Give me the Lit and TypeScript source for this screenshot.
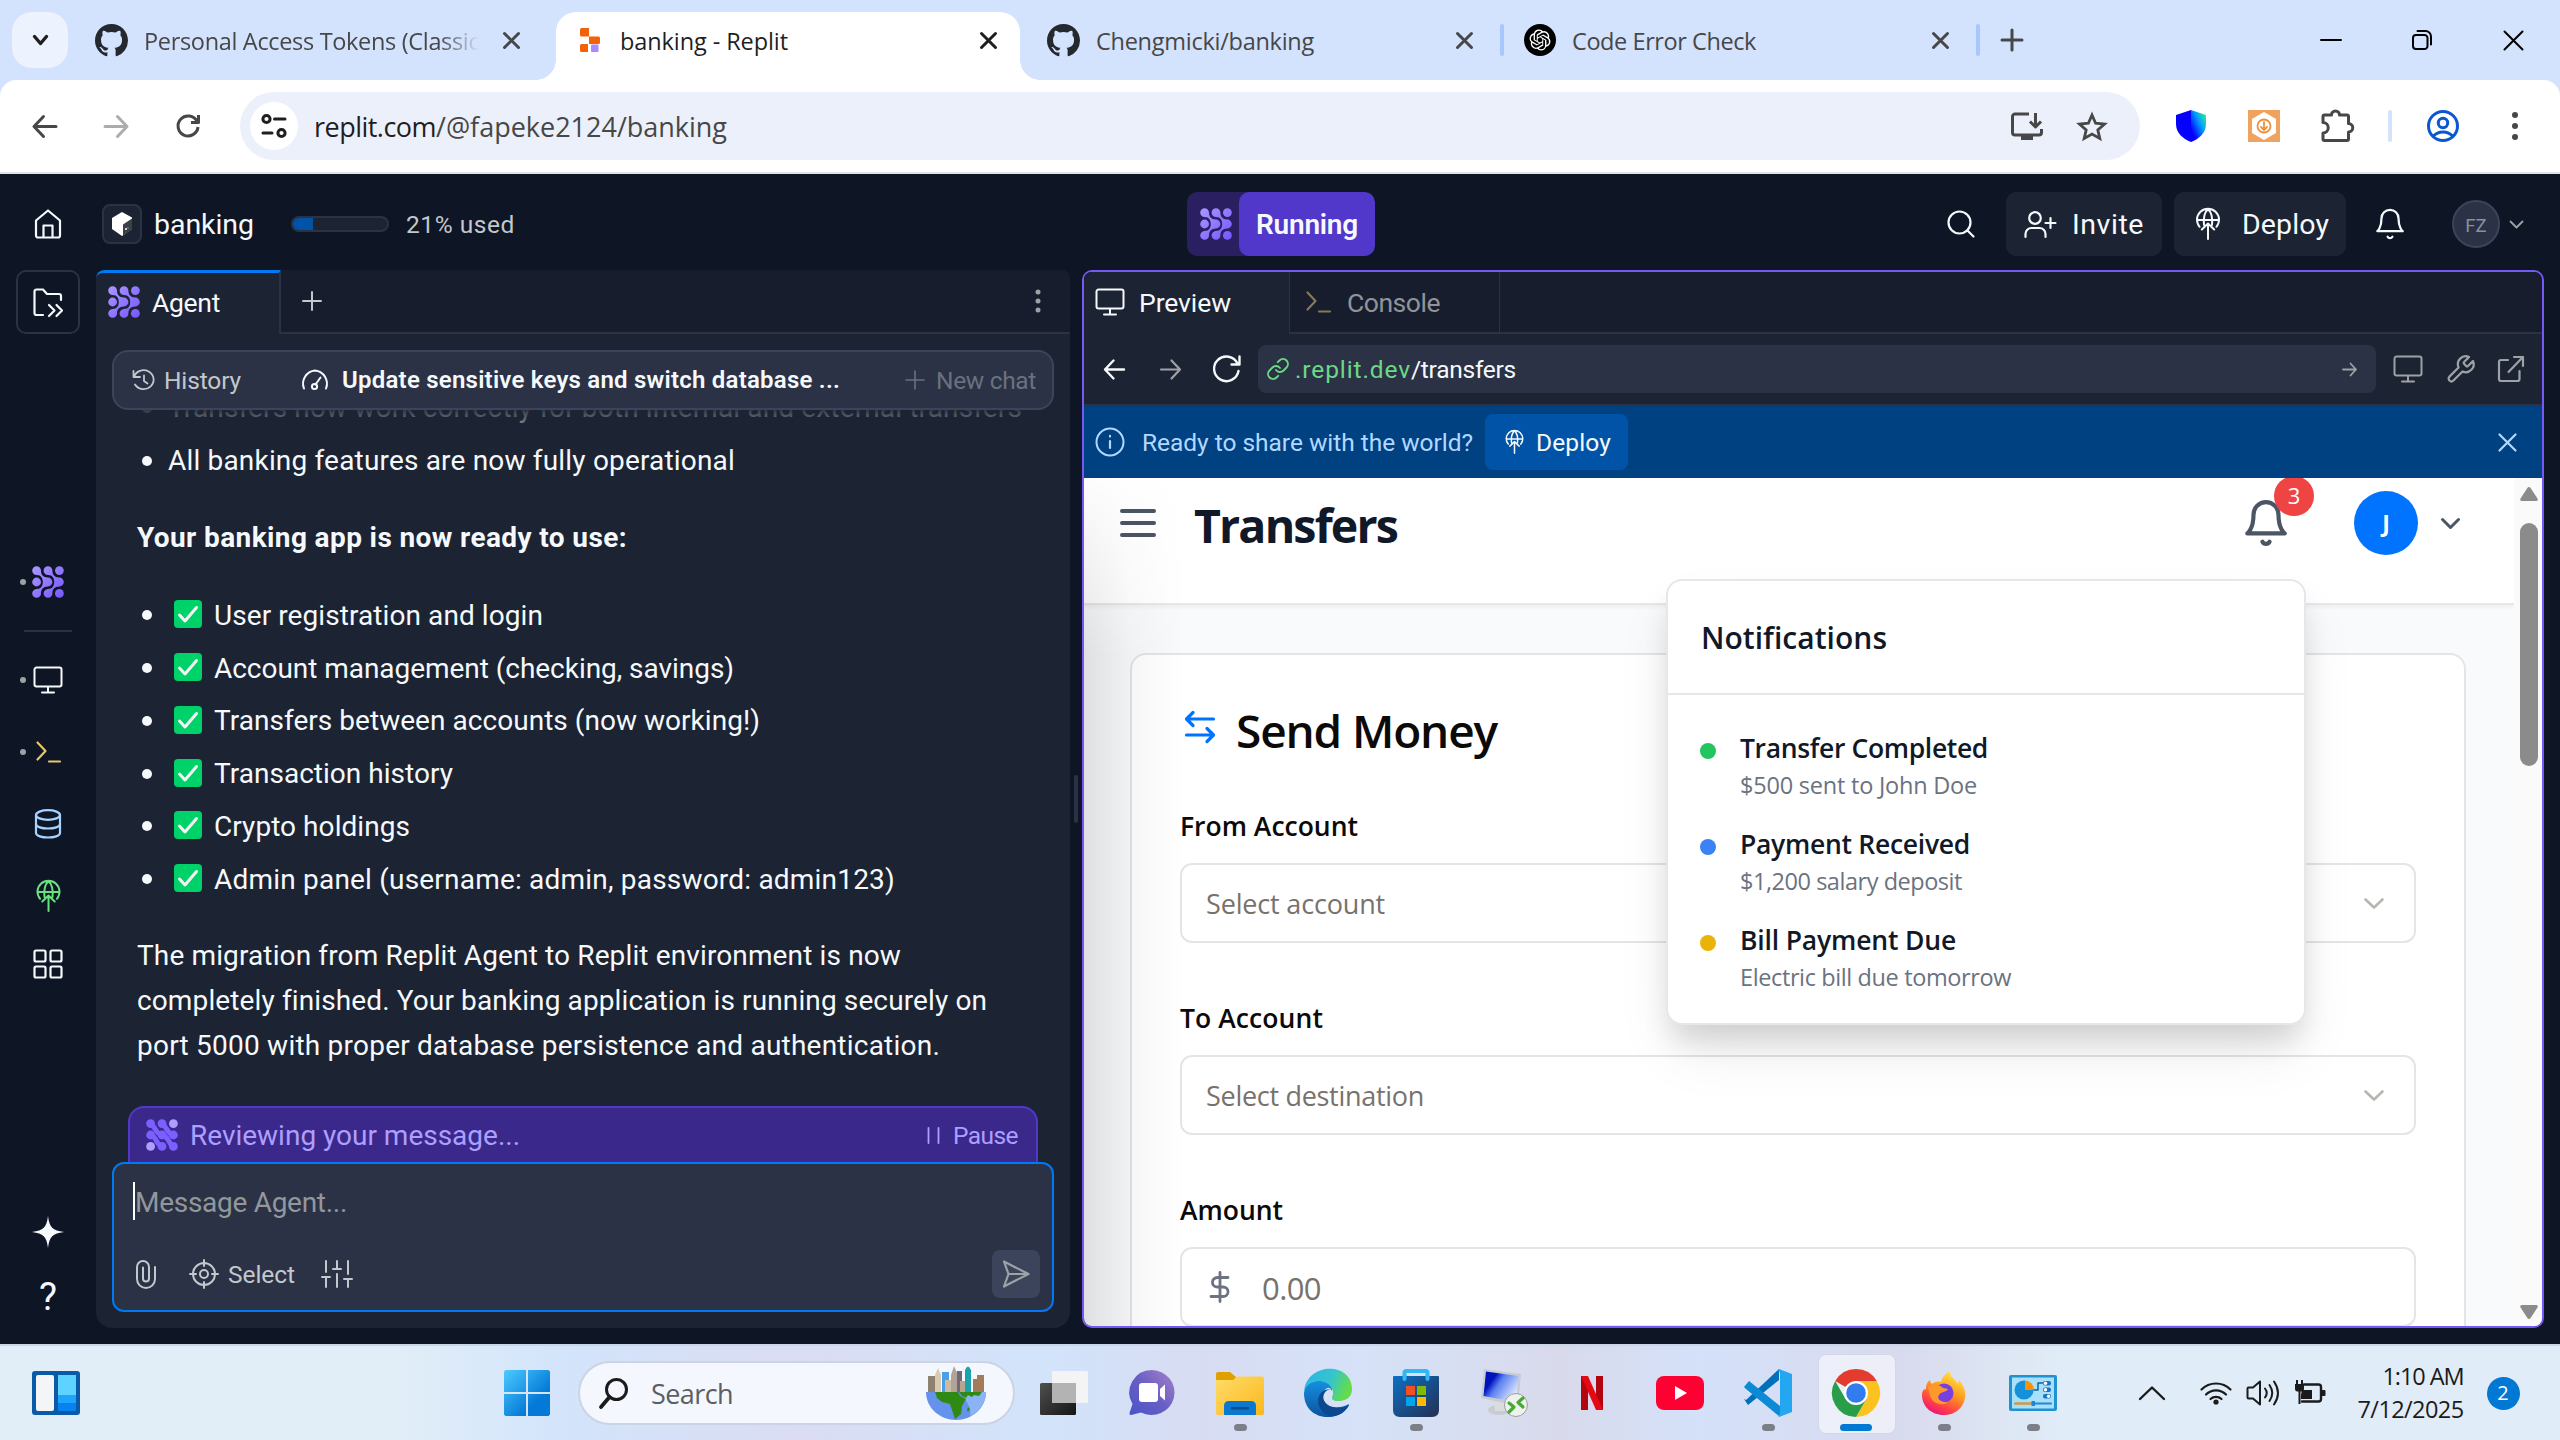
import { LitElement, html, svg, css, unsafeCSS, TemplateResult } from "lit";

/* ---------- type scale ---------- */
const UI = '"Open Sans", "Noto Sans", sans-serif';
const IDE = 'Roboto, "Noto Sans", sans-serif';
const TYPE: Record<string, [string, number, number]> = {
  tab: [UI, 23.5, 400], url: [UI, 27, 400],
  r28: [IDE, 28, 400], r28m: [IDE, 28.5, 400], r28b: [IDE, 28, 700], r28s: [IDE, 28, 600],
  r26: [IDE, 26.5, 400], r26m: [IDE, 26.5, 400], r24: [IDE, 24.5, 400], r24m: [IDE, 24.5, 400], r24s: [IDE, 24, 600],
  h1: [UI, 46.5, 700], h2: [UI, 46, 600], lab: [UI, 26.5, 600], val: [UI, 27, 400], amt: [UI, 31, 400],
  pop: [UI, 30, 600], item: [UI, 26.5, 600], sub: [UI, 23.5, 400],
  clock: [UI, 23.5, 400], search: [UI, 27, 400],
};
const typeCss = Object.entries(TYPE).map(([k, [f, s, w]]) => `.${k}{font-family:${f};font-size:${s}px;font-weight:${w}}`).join("");

const meter = document.createElement("canvas").getContext("2d")!;
/** A run of text tracked so that it fills the given width. */
const t = (text: string, type: string, width: number, cls = ""): TemplateResult => {
  const [f, s, w] = TYPE[type];
  meter.font = `${w} ${s}px ${f}`;
  const ls = (width - meter.measureText(text).width) / text.length;
  return html`<span class="t ${type} ${cls}" style="letter-spacing:${ls.toFixed(3)}px">${text}</span>`;
};
const ic = (w: number, h: number, body: unknown, cls = "", vb = `0 0 ${w} ${h}`) =>
  html`<svg class="ic ${cls}" width=${w} height=${h} viewBox=${vb}>${body}</svg>`;

/* ---------- icons ---------- */
const close = (n: number, cls = "", sw = 3) => ic(n, n, svg`<path d="M1.5 1.5L${n - 1.5} ${n - 1.5}M${n - 1.5} 1.5L1.5 ${n - 1.5}" stroke-width=${sw}/>`, cls);
const github = ic(33, 33, svg`<path class="solid" d="M8 0C3.58 0 0 3.58 0 8c0 3.54 2.29 6.53 5.47 7.59.4.07.55-.17.55-.38 0-.19-.01-.82-.01-1.49-2.01.37-2.53-.49-2.69-.94-.09-.23-.48-.94-.82-1.13-.28-.15-.68-.52-.01-.53.63-.01 1.08.58 1.23.82.72 1.21 1.87.87 2.33.66.07-.52.28-.87.51-1.07-1.78-.2-3.64-.89-3.64-3.95 0-.87.31-1.59.82-2.15-.08-.2-.36-1.02.08-2.12 0 0 .67-.21 2.2.82.64-.18 1.32-.27 2-.27s1.36.09 2 .27c1.53-1.04 2.2-.82 2.2-.82.44 1.1.16 1.92.08 2.12.51.56.82 1.27.82 2.15 0 3.07-1.87 3.75-3.65 3.95.29.25.54.73.54 1.48 0 1.07-.01 1.93-.01 2.2 0 .21.15.46.55.38A8.01 8.01 0 0 0 16 8c0-4.42-3.58-8-8-8z"/>`, "gh", "0 0 16 16");
const openai = ic(32, 32, svg`<circle cx="16" cy="16" r="16" fill="#000" stroke="none"/><path transform="translate(5.5 5.5) scale(.875)" fill="#fff" stroke="none" d="M22.2819 9.8211a5.9847 5.9847 0 0 0-.5157-4.9108 6.0462 6.0462 0 0 0-6.5098-2.9A6.0651 6.0651 0 0 0 4.9807 4.1818a5.9847 5.9847 0 0 0-3.9977 2.9 6.0462 6.0462 0 0 0 .7427 7.0966 5.98 5.98 0 0 0 .511 4.9107 6.051 6.051 0 0 0 6.5146 2.9001A5.9847 5.9847 0 0 0 13.2599 24a6.0557 6.0557 0 0 0 5.7718-4.2058 5.9894 5.9894 0 0 0 3.9977-2.9001 6.0557 6.0557 0 0 0-.7475-7.0729zm-9.022 12.6081a4.4755 4.4755 0 0 1-2.8764-1.0408l.1419-.0804 4.7783-2.7582a.7948.7948 0 0 0 .3927-.6813v-6.7369l2.02 1.1686a.071.071 0 0 1 .038.052v5.5826a4.504 4.504 0 0 1-4.4945 4.4944zm-9.6607-4.1254a4.4708 4.4708 0 0 1-.5346-3.0137l.142.0852 4.783 2.7582a.7712.7712 0 0 0 .7806 0l5.8428-3.3685v2.3324a.0804.0804 0 0 1-.0332.0615L9.74 19.9502a4.4992 4.4992 0 0 1-6.1408-1.6464zM2.3408 7.8956a4.485 4.485 0 0 1 2.3655-1.9728V11.6a.7664.7664 0 0 0 .3879.6765l5.8144 3.3543-2.0201 1.1685a.0757.0757 0 0 1-.071 0l-4.8303-2.7865A4.504 4.504 0 0 1 2.3408 7.872zm16.5963 3.8558L13.1038 8.364 15.1192 7.2a.0757.0757 0 0 1 .071 0l4.8303 2.7913a4.4944 4.4944 0 0 1-.6765 8.1042v-5.6772a.79.79 0 0 0-.407-.667zm2.0107-3.0231l-.142-.0852-4.7735-2.7818a.7759.7759 0 0 0-.7854 0L9.409 9.2297V6.8974a.0662.0662 0 0 1 .0284-.0615l4.8303-2.7866a4.4992 4.4992 0 0 1 6.6802 4.66zM8.3065 12.863l-2.02-1.1638a.0804.0804 0 0 1-.038-.0567V6.0742a4.4992 4.4992 0 0 1 7.3757-3.4537l-.142.0805L8.704 5.459a.7948.7948 0 0 0-.3927.6813zm1.0976-2.3654l2.602-1.4998 2.6069 1.4998v2.9994l-2.5974 1.4997-2.6067-1.4997Z"/>`);
const arrowL = (w: number, h: number, sw: number, cls = "") => ic(w, h, svg`<path d="M${h / 2} 1.5L2 ${h / 2}L${h / 2} ${h - 1.5}M2 ${h / 2}H${w - 1}" stroke-width=${sw}/>`, cls);
const arrowR = (w: number, h: number, sw: number, cls = "") => ic(w, h, svg`<path d="M${w - h / 2} 1.5L${w - 2} ${h / 2}L${w - h / 2} ${h - 1.5}M${w - 2} ${h / 2}H1" stroke-width=${sw}/>`, cls);
const agent = ic(32, 32, svg`<defs><linearGradient id="ag" gradientUnits="userSpaceOnUse" x1="0" y1="0" x2="32" y2="32"><stop offset="0" stop-color="#ab98ff"/><stop offset="1" stop-color="#7556ff"/></linearGradient></defs>
  <g fill="url(#ag)" stroke="none">
  <circle cx="4.6" cy="16" r="4.4"/><circle cx="27.4" cy="4.6" r="4.4"/><circle cx="27.4" cy="27.4" r="4.4"/>
  <path d="M4.6 .2a4.4 4.4 0 0 1 4.4 4.4c0 4 2 7 7 7a4.4 4.4 0 0 1 0 8.8c-5 0-7 3-7 7a4.4 4.4 0 1 1-4.6-4.4c5 0 6.4-3.6 6.4-7s-1.5-7-6.2-7A4.4 4.4 0 0 1 4.6 .2z"/>
  <path d="M16 .2a4.4 4.4 0 0 1 4.4 4.4c0 4 2 7 7 7a4.4 4.4 0 0 1 0 8.8c-5 0-7 3-7 7a4.4 4.4 0 1 1-4.6-4.4c5 0 6.4-3.6 6.4-7s-1.5-7-6.2-7A4.4 4.4 0 0 1 16 .2z"/></g>`);
const agentBusy = ic(32, 32, svg`<g fill="#7c60ff" stroke="none"><circle cx="4.6" cy="16" r="4.4"/><circle cx="16" cy="27.4" r="4.4"/><circle cx="27.4" cy="27.4" r="4.4"/><circle cx="4.6" cy="4.6" r="4.4"/><circle cx="16" cy="4.6" r="4.4"/><circle cx="16" cy="16" r="4.4"/><circle cx="27.4" cy="16" r="4.4"/></g>
  <g stroke="#7c60ff" stroke-width="5"><path d="M5 6C10 7 8 14 16 16C24 18 22 25 27 27M16 5C21 7 20 14 27 16M5 16C11 18 9 25 16 27"/></g><g fill="#ad9eff" stroke="none"><circle cx="27.4" cy="4.6" r="4.4"/><circle cx="4.6" cy="27.4" r="4.4"/></g>`);
const deploy = (w: number, h: number, cls = "") => ic(w, h, svg`<path d="M3.6 18.8A11 11 0 1 1 20.4 18.8M1 12H23M12 1C8.5 4.5 7 9 8 17M12 1C15.500 4.500 17 9 16 17M12 31V15.500M5.800 21.500L12 15.500L18.200 21.500" stroke-width="2"/>`, cls, "0 0 24 32");
const monitor = (cls = "") => ic(30, 28, svg`<path d="M3.5 1.5H26.5A2 2 0 0 1 28.5 3.5V18.5A2 2 0 0 1 26.5 20.5H3.5A2 2 0 0 1 1.5 18.5V3.5A2 2 0 0 1 3.5 1.5ZM15 20.5V26M9 26.5H21" stroke-width="2"/>`, cls);
const bellPath = (sw: number) => svg`<path d="M6 8a6 6 0 0 1 12 0c0 7 3 9 3 9H3s3-2 3-9M10.3 21a1.94 1.94 0 0 0 3.4 0" stroke-width=${sw}/>`;
const chev = (w: number, h: number, sw: number, cls = "") => ic(w, h, svg`<path d="M1.5 1.5L${w / 2} ${h - 1.5}L${w - 1.5} 1.5" stroke-width=${sw}/>`, cls);
const check = html`<svg class="check" width="28" height="28" viewBox="0 0 28 28"><rect width="28" height="28" rx="4" fill="#00d26a"/><path d="M5.5 15L11 21L22.5 7.5" fill="none" stroke="#f4f4f4" stroke-width="3" stroke-linecap="round" stroke-linejoin="round"/></svg>`;
const plus = (n: number, sw: number, cls = "") => ic(n, n, svg`<path d="M${n / 2} 0V${n}M0 ${n / 2}H${n}" stroke-width=${sw}/>`, cls);
const consoleIcon = (cls = "") => ic(25, 22, svg`<path d="M1.5 1.5L9.5 10L1.5 18.5M13 20.5H24" stroke-width="2.2"/>`, cls);

const spacing = css`
  .ml9 { margin-left: 9px; } .ml10 { margin-left: 10px; } .m12 { margin-left: 12px; } .ml14 { margin-left: 14px; }
  .ml16 { margin-left: 16px; } .ml17 { margin-left: 17px; } .ml22 { margin-left: 22px; }
  .ml23 { margin-left: 23px; } .ml33 { margin-left: 33px; } .ml34 { margin-left: 34px; } .ml35 { margin-left: 35px; } .ml36 { margin-left: 36px; } .ml41 { margin-left: 41px; } .ml42 { margin-left: 42px; } .ml47 { margin-left: 47px; }
  .dots3 { margin-left: 53px; } .srch { margin-left: 572px; } .bell { margin-left: 27px; } .fc { margin-left: 9px; }
  .pl { margin-left: 22px; } .gauge { margin-left: 59px; } .nc { margin-left: 66px; }
  .clipi { margin-left: 2px; } .tgt { margin-left: 32px; } .sld { margin-left: 26px; }
  .rl { margin-left: 30px; } .bx { margin-right: 25px; }
  .bigbell { margin: -3px -5px 0; } .usd { margin-left: 2px; color: #6b7280; }
  .start { margin-left: 424px; }
  .tv { margin-left: 25px; } .up { margin-left: 82px; } .wf { margin-left: 35px; }
`;

class AppRoot extends LitElement {
  static styles = [unsafeCSS(typeCss), css`
    :host { display: block; width: 2560px; height: 1440px; overflow: hidden; }
    * { box-sizing: border-box; }
    .screen { display: flex; flex-direction: column; width: 2560px; height: 1440px; background: #0e1525; }
    .row, .tabs, .bar { display: flex; align-items: center; }
    .t { white-space: pre; flex: none; line-height: 1.4; padding-top: 2px; }
    .ic { flex: none; display: block; fill: none; stroke: currentColor; stroke-linecap: round; stroke-linejoin: round; overflow: visible; }
    .solid { fill: currentColor; stroke: none; }
    .gh { color: #24292f; }
    .grow { flex: 1; }

    /* browser tabs */
    .tabs { height: 80px; background: #d3e2fd; color: #474747; flex: none; }
    .tabs .t { padding-top: 3px; }
    .pick { width: 56px; height: 56px; margin-left: 12px; border-radius: 20px; background: #ecf2fe; display: grid; place-items: center; color: #1f1f1f; }
    .tab { display: flex; align-items: center; height: 68px; flex: none; }
    .tab1 { width: 488px; padding-left: 27px; }
    .tab1 .clip { width: 335px; margin-left: 16px; overflow: hidden; -webkit-mask-image: linear-gradient(90deg, #000 88%, transparent); }
    .tab1 .x { margin-left: 24px; }
    .tabon { align-self: flex-end; width: 464px; padding-left: 24px; background: #fff; border-radius: 20px 20px 0 0; color: #1f1f1f; position: relative; }
    .tabon::before, .tabon::after { content: ""; position: absolute; bottom: 0; width: 20px; height: 20px; }
    .tabon::before { left: -20px; background: radial-gradient(circle at 0 0, transparent 19.5px, #fff 20px); }
    .tabon::after { right: -20px; background: radial-gradient(circle at 100% 0, transparent 19.5px, #fff 20px); }
    .tabon .t { margin-left: 18px; }
    .tabon .x { margin-left: 192px; }
    .tabon > * { margin-bottom: 12px; }
    .tab3 { width: 480px; padding-left: 27px; }
    .tab3 .t { margin-left: 16px; } .tab3 .x { margin-left: 142px; }
    .sep { width: 4px; height: 32px; border-radius: 2px; background: #a8c7fa; flex: none; }
    .sep.pale { background: #d3e3fd; }
    .tab4 { width: 472px; padding-left: 20px; }
    .tab4 .t { margin-left: 16px; } .tab4 .x { margin-left: 176px; }
    .newtab { margin-left: 22px; color: #474747; }
    .min { margin-left: 299px; } .max { margin-left: 71px; } .cls { margin-left: 71px; }
    .win { color: #000; }

    /* browser toolbar */
    .strip { height: 94px; background: #d3e2fd; flex: none; }
    .bar { height: 94px; padding-left: 32px; background: #fff; border-radius: 16px 16px 0 0; border-bottom: 2px solid #dfe3e1; color: #474747; }
    .faint { color: #acacac; }
    .omni { display: flex; align-items: center; margin-left: 40px; width: 1900px; height: 68px; border-radius: 34px; background: #ecf0fa; padding-right: 33px; }
    .tune { width: 48px; height: 48px; margin-left: 10px; border-radius: 50%; background: #fff; display: grid; place-items: center; color: #1f1f1f; }
    .host { margin-left: 16px; color: #1f1f1f; }

    /* workspace header */
    .head { display: flex; align-items: center; height: 96px; padding: 4px 0 0 34px; color: #f5f9fc; flex: none; }
    .appbox { width: 40px; height: 40px; margin-left: 40px; border: 2px solid #2b3245; border-radius: 8px; background: #1c2333; display: grid; place-items: center; }
    .meter { margin-left: 37px; width: 98px; height: 16px; border-radius: 8px; background: #1c2333; border: 2px solid #2b3245; overflow: hidden; }
    .meter i { display: block; height: 100%; background: #0053a6; }
    .dim { color: #c2c8cc; }
    .run { display: flex; margin-left: 672px; width: 188px; height: 64px; border-radius: 10px; background: #2a1f61; overflow: hidden; }
    .run .a { width: 52px; display: grid; place-items: center; padding-left: 5px; }
    .run .b { flex: 1; border-radius: 10px; background: #5238ca; display: grid; place-items: center; }
    .hb { display: flex; align-items: center; height: 64px; border-radius: 10px; background: #1c2333; }
    .invite { margin-left: 31px; width: 156px; padding-left: 18px; }
    .dep { margin-left: 12px; width: 172px; padding-left: 22px; }
    .face { margin-left: 45px; width: 48px; height: 48px; border-radius: 50%; border: 2px solid #3c445c; background: #2b3245; display: grid; place-items: center; color: #8a909c; }
    .fz { font: 400 18.5px Roboto, sans-serif; padding-top: 4px; }

    /* workspace */
    .work { display: flex; height: 1074px; flex: none; }
    .side { width: 96px; display: flex; flex-direction: column; align-items: center; color: #f5f9fc; }
    .toggle { width: 64px; height: 64px; border: 2px solid #2b3245; border-radius: 10px; display: grid; place-items: center; }
    .si { height: 40px; width: 96px; display: grid; place-items: center; flex: none; position: relative; margin-top: 32px; }
    .si.first { margin-top: 228px; } .si.near { margin-top: 28px; } .si.last { margin-top: 24px; }
    .si.on::before { content: ""; position: absolute; left: 20px; top: 17px; width: 6px; height: 6px; border-radius: 50%; background: #9da2a6; }
    .rule { width: 48px; height: 2px; background: #2b3245; margin-top: 28px; flex: none; }
    .yellow { color: #e8c766; } .blue { color: #a6d2ff; } .green { color: #6be07f; }
    .q { font: 400 38px/42px Roboto, sans-serif; }

    .agent { width: 974px; height: 1058px; background: #1c2333; border-radius: 8px 8px 16px 16px; overflow: hidden; display: flex; flex-direction: column; color: #f5f9fc; }
    .ptabs { display: flex; height: 64px; flex: none; background: #171d2d; }
    .ptab { display: flex; align-items: center; background: #1c2333; }
    .ptab.ag { width: 185px; padding-left: 12px; border-top: 3px solid #0079f2; border-right: 2px solid #2b3245; border-radius: 8px 0 0 0; padding-bottom: 3px; }
    .ptabs .rest { flex: 1; display: flex; align-items: center; border-bottom: 2px solid #2b3245; }
    .kebab { color: #9da2a6; margin-left: 715px; }
    .hist { height: 60px; margin: 16px 16px 0; padding: 0 18px; border: 2px solid #3c445c; border-radius: 16px; background: #2b3245; display: flex; align-items: center; flex: none; z-index: 2; position: relative; }
    .off { color: #6a7080; }
    .chat { height: 696px; overflow: hidden; padding-left: 41px; flex: none; position: relative; }
    .chat::before { content: ""; position: absolute; inset: 0 0 auto 0; height: 44px; background: linear-gradient(rgba(28,35,51,.9), rgba(28,35,51,.6) 12px, rgba(28,35,51,0)); z-index: 1; }
    .li { display: flex; align-items: center; height: 45px; margin-bottom: 7.8px; }
    .li::before { content: ""; width: 10px; height: 10px; border-radius: 50%; background: #f5f9fc; margin: 3px 16px 0 5px; flex: none; }
    .l1 { margin-top: -26px; }
    .chk::before { margin-right: 22px; margin-top: 2px; }
    .check { margin-right: 12px; flex: none; }
    .p { height: 45px; display: flex; align-items: center; }
    .hd { margin: 32.5px 0; } .par { margin-top: 31px; }
    .status { height: 56px; margin: 0 32px; border: 2px solid #5238ca; border-bottom: 0; border-radius: 16px 16px 0 0; background: #3a298a; display: flex; align-items: center; padding-left: 16px; color: #ad9eff; flex: none; }
    .status .pause { margin: 0 18px 0 13px; }
    .input { height: 150px; margin: 0 16px; border: 2px solid #0079f2; border-radius: 12px; background: #2b3245; padding: 18px 12px 12px 18px; display: flex; flex-direction: column; justify-content: space-between; color: #c2c8cc; flex: none; }
    .ph { display: flex; align-items: center; height: 40px; color: #92979c; }
    .caret { width: 2px; height: 38px; background: #fff; margin: -2px 0 0 1px; }
    .send { width: 48px; height: 48px; border-radius: 8px; background: #3c445c; color: #9da2a6; display: grid; place-items: center; }
    .split { width: 12px; display: flex; align-items: flex-start; padding: 505px 0 0 4px; }
    .split i { width: 4px; height: 48px; border-radius: 2px; background: #2b3245; }

    .prev { width: 1462px; height: 1058px; border: 2px solid #7559f5; border-radius: 10px; overflow: hidden; background: #1c2333; display: flex; flex-direction: column; color: #f5f9fc; }
    .prev .ptabs { height: 62px; }
    .pv { width: 206px; padding-left: 11px; border-right: 1px solid #2b3245; padding-bottom: 2px; }
    .con { width: 210px; padding-left: 16px; background: none; border-right: 1px solid #2b3245; border-bottom: 2px solid #2b3245; color: #8f949b; }
    .khaki { color: #857a55; }
    .addr { height: 72px; display: flex; align-items: center; padding-left: 19px; border-bottom: 2px solid #2b3245; flex: none; color: #9da2a6; }
    .box { width: 1118px; height: 48px; border-radius: 8px; background: #2b3245; margin-left: 17px; display: flex; align-items: center; padding: 0 18px 0 9px; color: #6bd985; }
    .box .dom { margin-left: 6px; }
    .w { color: #f5f9fc; } .g { color: #9da2a6; }
    .banner { height: 72px; background: #004182; display: flex; align-items: center; padding-left: 11px; color: #b2d8ff; flex: none; }
    .banner .btn { margin-left: 12px; width: 143px; height: 56px; border-radius: 8px; background: #0053a6; display: flex; align-items: center; padding-left: 20px; color: #f5f9fc; }

    /* page inside the preview */
    .page { flex: 1; min-height: 0; display: flex; position: relative; overflow: hidden; background: #f8fafc; }
    .main { width: 1430px; display: flex; flex-direction: column; color: #0c0a09; }
    .top { height: 127px; flex: none; background: #fff; border-bottom: 2px solid #e5e7eb; padding: 0 54px 35px 36px; display: flex; align-items: center; color: #4b5563; box-shadow: 0 2px 4px rgba(0,0,0,.05); }
    .top .h1 { color: #111827; margin-left: 38px; padding-top: 5px; }
    .bellwrap { position: relative; margin-left: auto; height: 44px; }
    .badge { position: absolute; left: 28px; top: -25px; width: 40px; height: 40px; border-radius: 50%; background: #ef4444; color: #fff; font: 400 22px/39px "Open Sans", sans-serif; text-align: center; }
    .ava { width: 64px; height: 64px; border-radius: 50%; background: #0073ff; color: #fff; margin: 0 23px 0 68px; font: 700 23px/64px "Open Sans", sans-serif; text-align: center; }
    .card { margin: 48px 48px 0 46px; height: 760px; flex: none; border: 2px solid #e5e5e5; border-radius: 16px; background: #fff; padding: 40px 48px; }
    .ct { height: 64px; display: flex; align-items: center; color: #0073ff; padding-left: 5px; }
    .ct .t { color: #0c0a09; margin-left: 21px; padding-top: 6px; }
    .lb { height: 40px; display: flex; align-items: center; margin: 55px 0 17px; }
    .lb.f { margin-top: 47px; }
    .fld { height: 80px; border: 2px solid #e5e5e5; border-radius: 12px; display: flex; align-items: center; padding: 0 30px 0 24px; color: #78716c; }
    .fld .cv { margin-left: auto; color: #b9b5b2; }
    .fld .amt { margin-left: 30px; padding-top: 4px; }
    .shade { position: absolute; left: 0; top: 0; width: 100px; height: 100%; background: linear-gradient(90deg, rgba(0,0,0,.1), rgba(0,0,0,.035) 45%, transparent); -webkit-mask-image: linear-gradient(rgba(0,0,0,.1), #000 180px); }
    .scroll { width: 28px; background: #fafafa; display: flex; flex-direction: column; align-items: center; padding: 9px 0 0 2px; color: #8b8b8b; }
    .scroll .thumb { width: 18px; height: 243px; border-radius: 9px; background: #8b8b8b; margin: 22px 0 539px; flex: none; }
    .popv { position: absolute; left: 582px; top: 101px; width: 640px; height: 446px; background: #fff; border: 2px solid #e5e7eb; border-radius: 16px; box-shadow: 0 20px 30px -6px rgba(0,0,0,.14), 0 30px 60px -6px rgba(0,0,0,.08); color: #111827; }
    .popv .ph2 { height: 114px; border-bottom: 2px solid #e5e7eb; display: flex; align-items: center; padding-left: 33px; }
    .list { padding: 32px 32px 0; }
    .nt { display: flex; height: 96px; }
    .nt i { width: 16px; height: 16px; border-radius: 50%; margin: 16px 24px 0 0; }
    .nt div { display: flex; flex-direction: column; }
    .nt .item { line-height: 40px; padding-top: 1px; } .nt .sub { line-height: 34px; color: #6b7280; padding: 0; }
    .c0 { background: #22c55e; } .c1 { background: #3b82f6; } .c2 { background: #eab308; }

    /* taskbar */
    .task { height: 96px; flex: none; display: flex; align-items: center; padding-left: 32px; border-top: 2px solid #cbd5e8; color: #1b1b1b;
      background: linear-gradient(90deg, #e1eef8 0, #e1eef8 400px, #d3e4fb 560px, #dadcf2 800px, #d2e4fb 1040px, #d7dcf2 1200px, #d6e2f8 1360px, #d8daeb 1560px, #d4e1f9 1700px, #d8daed 1900px, #e0ecf7 2060px, #e0ecf8 100%); }
    .find { margin-left: 28px; width: 437px; height: 64px; border-radius: 32px; background: #f4f7fd; border: 2px solid #cbd4e4; display: flex; align-items: center; padding: 0 27px 0 19px; color: #1b1b1b; }
    .find .t { margin-left: 23px; color: #5b5e62; }
    .app { width: 48px; height: 96px; display: grid; place-items: center; position: relative; flex: none; }
    .app + .app { margin-left: 40.05px; }
    .app.dot::after { content: ""; position: absolute; left: 18px; top: 79px; width: 13px; height: 7px; border-radius: 4px; background: #7c7f87; }
    .app.act::before { content: ""; position: absolute; left: -14px; top: 9px; width: 76px; height: 78px; border-radius: 8px; background: rgba(255,255,255,.55); border: 1px solid #d5d8e4; }
    .app.act::after { content: ""; position: absolute; left: 8px; top: 79px; width: 32px; height: 7px; border-radius: 4px; background: #0078d4; }
    .app svg { position: relative; stroke: none; }
    .clk { display: flex; flex-direction: column; align-items: flex-end; width: 105px; margin-left: 33px; }
    .clk .t { line-height: 33px; padding: 0; }
    .two { margin-left: 23px; width: 33px; height: 33px; border-radius: 50%; background: #0078d4; color: #fff; font: 400 20px/32px "Open Sans", sans-serif; text-align: center; }
  `, spacing];

  private tabStrip() {
    return html`<div class="tabs">
      <div class="pick">${chev(15, 10, 3.4)}</div>
      <div class="tab tab1">${github}<div class="clip">${t("Personal Access Tokens (Classic)", "tab", 342)}</div>${close(17, "x")}</div>
      <div class="tab tabon">${ic(22, 25, svg`<g stroke="none"><path fill="#f26207" d="M0 1.5A1.5 1.5 0 0 1 1.5 0H9V8.5H1.5A1.5 1.5 0 0 1 0 7zM9 8.5H18.5A1.5 1.5 0 0 1 20 10V14.5A1.5 1.5 0 0 1 18.5 16H9zM0 17.5A1.5 1.5 0 0 1 1.5 16H8V24H1.5A1.5 1.5 0 0 1 0 22.5z"/><rect x="11" y="16.5" width="7.5" height="7.5" rx="1" fill="#a78bfa"/></g>`)}${t("banking - Replit", "tab", 168)}${close(17, "x")}</div>
      <div class="tab tab3">${github}${t("Chengmicki/banking", "tab", 218)}${close(17, "x")}</div><i class="sep"></i>
      <div class="tab tab4">${openai}${t("Code Error Check", "tab", 184)}${close(17, "x")}</div><i class="sep"></i>
      ${plus(20, 3, "newtab")}
      ${ic(20, 2, svg`<path d="M0 1H20" stroke-width="2"/>`, "win min")}
      ${ic(20, 20, svg`<path d="M4 5H12.5A3 3 0 0 1 15.5 8V16A3 3 0 0 1 12.5 19H4A3 3 0 0 1 1 16V8A3 3 0 0 1 4 5M5.5 1H13.5A5.5 5.5 0 0 1 19 6.5V14.5" stroke-width="2"/>`, "win max")}
      ${close(21, "win cls", 2)}
    </div>`;
  }

  private toolbar() {
    return html`<div class="strip"><div class="bar">
      ${arrowL(25, 23, 3)}${arrowR(25, 23, 3, "faint ml47")}
      ${ic(24, 24, svg`<path d="M21 7.5A10 10 0 1 0 22 13M22.5 1V8.5H15" stroke-width="3" stroke-linecap="butt"/>`, "ml47")}
      <div class="omni"><div class="tune">${ic(26, 24, svg`<circle cx="5.5" cy="5" r="3.6" stroke-width="3"/><path d="M13.5 5H24M2 19H11" stroke-width="3"/><circle cx="20.5" cy="19" r="3.6" stroke-width="3"/>`)}</div>
        ${t("replit.com", "url", 122, "host")}${t("/@fapeke2124/banking", "url", 291)}<span class="grow"></span>
        ${ic(32, 28, svg`<path d="M18 2H4A2.5 2.5 0 0 0 1.5 4.5V20.5A2.5 2.5 0 0 0 4 23H28A2.5 2.5 0 0 0 30.5 20.5V17M24.5 1V14M19 9.5L24.5 15L30 9.5" stroke-width="3" stroke-linecap="butt"/><path d="M10 22H22V28H10z" class="solid"/>`)}
        ${ic(30, 28, svg`<path d="M15 3L18.6 11.2L27.5 12L20.8 17.9L22.8 26.5L15 22L7.2 26.5L9.2 17.9L2.5 12L11.4 11.2Z" stroke-width="2.8" stroke-linejoin="miter"/>`, "ml34")}
        </div>
      ${ic(30, 32, svg`<defs><linearGradient id="sh" x1="0" y1="1" x2="1" y2="0"><stop offset=".2" stop-color="#0500ff"/><stop offset=".6" stop-color="#00a0ff"/><stop offset="1" stop-color="#3dff70"/></linearGradient></defs><g stroke="none"><path fill="#0500ff" d="M15 0L0 5V14C0 23 7 29 15 32z"/><path fill="url(#sh)" d="M15 0L30 5V14C30 23 23 29 15 32z"/></g>`, "ml36")}
      ${ic(32, 32, svg`<g stroke="none"><rect width="32" height="32" fill="#efa35f"/><path fill="#fff" d="M16 2L28 9V23L16 30L4 23V9z"/></g><g stroke="#ee8f3c" stroke-width="1.8"><circle cx="16" cy="16" r="6.5"/><path d="M16 12V19.5M13 17L16 20L19 17"/></g>`, "ml42")}
      ${ic(34, 32, svg`<path d="M2 6.5A1.5 1.5 0 0 1 3.5 5H10.5A4 4 0 0 1 18.5 5H26A1.5 1.5 0 0 1 27.5 6.5V13.5A4 4 0 0 1 27.5 22V29A1.5 1.5 0 0 1 26 30.5H3.5A1.5 1.5 0 0 1 2 29V23A5 5 0 0 0 2 12.5Z" stroke-width="3"/>`, "ml41")}
      <i class="sep pale ml33"></i>
      ${ic(32, 32, svg`<g stroke="#0b57d0" stroke-width="3"><circle cx="16" cy="16" r="14.5"/><circle cx="16" cy="13" r="4.7"/><path d="M6.5 26C11 20.5 21 20.5 25.5 26"/></g>`, "ml35")}
      ${ic(6, 28, svg`<g class="solid"><circle cx="3" cy="3" r="3"/><circle cx="3" cy="14" r="3"/><circle cx="3" cy="25" r="3"/></g>`, "dots3")}
    </div></div>`;
  }

  private header() {
    return html`<div class="head">
      ${ic(28, 30, svg`<path d="M2 11.5L14 1.5L26 11.5V26.5A2 2 0 0 1 24 28.5H4A2 2 0 0 1 2 26.5ZM9.5 28V16.5H18.5V28" stroke-width="2.2"/>`)}
      <div class="appbox">${ic(24, 26, svg`<g stroke="none"><path fill="#fff" d="M12 1L22 6.5V18L12 25L2 18V7z"/><path fill="#3a3f48" d="M13 13.5L22 7.5V18.5L13 24.5z"/><circle cx="16" cy="18" r="1" fill="#fff"/><circle cx="18" cy="17" r=".8" fill="#5db85d"/></g>`)}</div>
      ${t("banking", "r28m", 100, "m12")}
      <div class="meter"><i style="width:21%"></i></div>
      ${t("21% used", "r24", 109, "dim ml17")}
      <div class="run"><div class="a">${agent}</div><div class="b">${t("Running", "r28s", 102)}</div></div>
      ${ic(28, 28, svg`<circle cx="12.5" cy="12.5" r="11" stroke-width="2.2"/><path d="M20.5 20.5L26.5 26.5" stroke-width="2.2"/>`, "srch")}
      <div class="hb invite">${ic(32, 27, svg`<circle cx="11" cy="7" r="5.8" stroke-width="2.2"/><path d="M1.5 26V23A6 6 0 0 1 7.5 17H15.5A6 6 0 0 1 21.5 23V26M26.5 7V17M21.5 12H31.5" stroke-width="2.2"/>`)}${t("Invite", "r28m", 72, "ml16")}</div>
      <div class="hb dep">${deploy(24, 32)}${t("Deploy", "r28m", 87, "ml22")}</div>
      ${ic(34, 34, bellPath(1.6), "bell", "0 0 24 24")}
      <div class="face"><span class="fz">FZ</span></div>
      ${chev(15, 9, 1.8, "g fc")}
    </div>`;
  }

  private sidebar() {
    return html`<div class="side">
      <div class="toggle">${ic(31, 29, svg`<path d="M10 27H3.5A2 2 0 0 1 1.5 25V3.5A2 2 0 0 1 3.5 1.5H10L14 6H26A2 2 0 0 1 28 8V12M16 17L21.5 22.5L16 28M23.5 17L29 22.5L23.5 28" stroke-width="2.2"/>`)}</div>
      <div class="si first on">${agent}</div><div class="rule"></div>
      <div class="si near on">${monitor()}</div>
      <div class="si on yellow">${consoleIcon()}</div>
      <div class="si blue">${ic(28, 30, svg`<ellipse cx="14" cy="6" rx="12" ry="4.8" stroke-width="2.2"/><path d="M2 6V24C2 30 26 30 26 24V6M2 15C2 21 26 21 26 15" stroke-width="2.2"/>`)}</div>
      <div class="si green">${deploy(25, 32)}</div>
      <div class="si near">${ic(30, 30, svg`<g stroke-width="2.2"><rect x="1.5" y="1.5" width="11" height="11" rx="1.5"/><rect x="17.5" y="1.5" width="11" height="11" rx="1.5"/><rect x="1.5" y="17.5" width="11" height="11" rx="1.5"/><rect x="17.5" y="17.5" width="11" height="11" rx="1.5"/></g>`)}</div>
      <div class="si first">${ic(32, 32, svg`<path class="solid" d="M16 0C17.5 11.5 20.5 14.5 32 16C20.5 17.5 17.5 20.5 16 32C14.5 20.5 11.5 17.5 0 16C11.5 14.5 14.5 11.5 16 0z"/>`)}</div>
      <div class="si last q">?</div>
    </div>`;
  }

  private agentPanel() {
    const items: [string, number][] = [["User registration and login", 329], ["Account management (checking, savings)", 520], ["Transfers between accounts (now working!)", 546], ["Transaction history", 239], ["Crypto holdings", 196], ["Admin panel (username: admin, password: admin123)", 681]];
    const lines: [string, number][] = [["The migration from Replit Agent to Replit environment is now", 764], ["completely finished. Your banking application is running securely on", 849], ["port 5000 with proper database persistence and authentication.", 803]];
    return html`<div class="agent">
      <div class="ptabs"><div class="ptab ag">${agent}${t("Agent", "r26m", 68, "m12")}</div>
        <div class="rest">${plus(18, 2, "dim pl")}${ic(4, 22, svg`<g class="solid"><circle cx="2" cy="2" r="2.5"/><circle cx="2" cy="11" r="2.5"/><circle cx="2" cy="20" r="2.5"/></g>`, "kebab")}</div></div>
      <div class="hist">
        ${ic(23, 21, svg`<path d="M1.5 1V7H8M2 7A10 9.5 0 1 1 3 14.5M12 5.5V11L15.5 13.5" stroke-width="1.8"/>`, "dim")}
        ${t("History", "r24", 77, "dim ml9")}
        ${ic(30, 22, svg`<path d="M4 19.5A13.2 13.2 0 0 1 15 1.5A13.2 13.2 0 0 1 26 19.5M15.5 15.5L20.5 8.5" stroke-width="2"/><circle cx="14.5" cy="17.5" r="2.6" stroke-width="2"/>`, "gauge")}
        ${t("Update sensitive keys and switch database ...", "r24s", 498, "m12")}
        ${plus(18, 1.6, "off nc")}${t("New chat", "r24", 100, "off m12")}
      </div>
      <div class="chat">
        <div class="li l1">${t("Transfers now work correctly for both internal and external transfers", "r28", 854)}</div>
        <div class="li">${t("All banking features are now fully operational", "r28", 567)}</div>
        <div class="p hd">${t("Your banking app is now ready to use:", "r28b", 490)}</div>
        ${items.map(([s, w]) => html`<div class="li chk">${check}${t(s, "r28", w)}</div>`)}
        <div class="par">${lines.map(([s, w]) => html`<div class="p">${t(s, "r28", w)}</div>`)}</div>
      </div>
      <div class="status">${agentBusy}${t("Reviewing your message...", "r28", 330, "m12")}<span class="grow"></span>
        ${ic(13, 17, svg`<path d="M1.5 1V16M11.5 1V16" stroke-width="1.8"/>`)}${t("Pause", "r24", 65, "pause")}</div>
      <div class="input">
        <div class="ph"><i class="caret"></i>${t("Message Agent...", "r28", 212)}</div>
        <div class="row">
          ${ic(24, 29, svg`<path d="M21 7V19A9 9 0 0 1 3 19V7A6 6 0 0 1 15 7V18.5A3 3 0 0 1 9 18.5V7.5" stroke-width="2"/>`, "clipi")}
          ${ic(28, 28, svg`<circle cx="14" cy="14" r="11" stroke-width="2"/><circle cx="14" cy="14" r="4" stroke-width="2"/><path d="M14 0V6M14 22V28M0 14H6M22 14H28" stroke-width="2"/>`, "tgt")}
          ${t("Select", "r24", 67, "ml10")}
          ${ic(32, 28, svg`<path d="M5 1V12M5 17V27M1 17H9M16 1V9M12 9H20M16 14V27M27 1V14M27 19V27M23 19H31" stroke-width="2"/>`, "sld")}
          <span class="grow"></span>
          <div class="send">${ic(28, 28, svg`<path d="M2 1.5L26.5 14L2 26.5L6.5 14ZM6.5 14H26" stroke-width="2.2"/>`)}</div>
        </div>
      </div>
    </div>`;
  }

  private page() {
    const notes: [string, number, string, number][] = [["Transfer Completed", 248, "$500 sent to John Doe", 237], ["Payment Received", 230, "$1,200 salary deposit", 222], ["Bill Payment Due", 216, "Electric bill due tomorrow", 271]];
    return html`<div class="page">
      <div class="main">
        <div class="top">
          ${ic(36, 28, svg`<path d="M2 2H34M2 14H34M2 26H34" stroke-width="4"/>`)}
          ${t("Transfers", "h1", 203)}
          <div class="bellwrap">${ic(50, 50, bellPath(2), "bigbell", "0 0 24 24")}<span class="badge">3</span></div>
          <div class="ava">J</div>${chev(19, 11, 3)}
        </div>
        <div class="card">
          <div class="ct">${ic(30, 32, svg`<path d="M8 1.5L1.5 8L8 14.5M2 8H28.5M22 17.5L28.5 24L22 30.5M28 24H1.5" stroke-width="3.2"/>`)}${t("Send Money", "h2", 261)}</div>
          <div class="lb f">${t("From Account", "lab", 178)}</div>
          <div class="fld">${t("Select account", "val", 179)}${chev(20, 11, 2.6, "cv")}</div>
          <div class="lb">${t("To Account", "lab", 143)}</div>
          <div class="fld">${t("Select destination", "val", 218)}${chev(20, 11, 2.6, "cv")}</div>
          <div class="lb">${t("Amount", "lab", 103)}</div>
          <div class="fld">${ic(24, 32, svg`<path d="M12 1.5V30.5M20 6.5H9.5A5 4.7 0 0 0 9.5 16H15A5 4.7 0 0 1 15 25.5H3" stroke-width="2.8"/>`, "usd")}${t("0.00", "amt", 59)}</div>
        </div>
      </div>
      <div class="scroll">${ic(18, 14, svg`<path class="solid" d="M9 0Q10 0 10.6 1L17.5 11.5Q18.5 14 16 14H2Q-.5 14 .5 11.5L7.4 1Q8 0 9 0z"/>`)}<i class="thumb"></i>${ic(18, 14, svg`<path class="solid" d="M9 14Q10 14 10.6 13L17.5 2.5Q18.5 0 16 0H2Q-.5 0 .5 2.5L7.4 13Q8 14 9 14z"/>`)}</div>
      <div class="shade"></div>
      <div class="popv"><div class="ph2">${t("Notifications", "pop", 186)}</div>
        <div class="list">${notes.map(([a, aw, b, bw], i) => html`<div class="nt"><i class="c${i}"></i><div>${t(a, "item", aw)}${t(b, "sub", bw)}</div></div>`)}</div></div>
    </div>`;
  }

  private preview() {
    return html`<div class="prev">
      <div class="ptabs"><div class="ptab pv">${monitor()}${t("Preview", "r26m", 92, "ml14")}</div>
        <div class="ptab con">${consoleIcon("khaki")}${t("Console", "r26", 93, "ml16")}</div><div class="rest"></div></div>
      <div class="addr">${arrowL(22, 21, 2.4, "w")}${arrowR(22, 21, 2.2, "ml35")}
        ${ic(29, 28, svg`<path d="M25.5 8.5A12.3 12.3 0 1 0 26.5 16M27.5 1.5V9.5H19.5" stroke-width="2.4"/>`, "w rl")}
        <div class="box">${ic(22, 22, svg`<path d="M10 13a5 5 0 0 0 7.54.54l3-3a5 5 0 0 0-7.07-7.07l-1.72 1.71M14 11a5 5 0 0 0-7.54-.54l-3 3a5 5 0 0 0 7.07 7.07l1.71-1.71" stroke-width="1.9"/>`, "", "1 1 22 22")}${t(".replit.dev", "r24", 116, "dom")}${t("/transfers", "r24", 105, "w")}<span class="grow"></span>${arrowR(16, 15, 1.8, "g")}</div>
        ${monitor("ml17")}
        ${ic(29, 29, svg`<path d="M14.7 6.3a1 1 0 0 0 0 1.4l1.6 1.6a1 1 0 0 0 1.4 0l3.77-3.77a6 6 0 0 1-7.94 7.94l-6.91 6.91a2.12 2.12 0 0 1-3-3l6.91-6.91a6 6 0 0 1 7.94-7.94l-3.76 3.76z" stroke-width="1.7"/>`, "ml23", "1 1 22 22")}
        ${ic(28, 28, svg`<path d="M11 5H4A2 2 0 0 0 2 7V24A2 2 0 0 0 4 26H20.5A2 2 0 0 0 22.5 24V16M17 2H26V11M26 2L11.5 17" stroke-width="2.2"/>`, "ml22")}
      </div>
      <div class="banner">${ic(30, 30, svg`<circle cx="15" cy="15" r="13.5" stroke-width="2"/><path d="M15 14V21M15 8.8V9.6" stroke-width="2.2"/>`)}${t("Ready to share with the world?", "r24", 331, "ml17")}
        <div class="btn">${deploy(19, 24)}${t("Deploy", "r24m", 75, "m12")}</div><span class="grow"></span>${close(19, "bx", 2.2)}</div>
      ${this.page()}
    </div>`;
  }

  private taskbar() {
    return html`<div class="task">
      ${ic(48, 44, svg`<g stroke="none"><rect width="48" height="44" rx="3" fill="#0a5aa8"/><rect x="4" y="4" width="18" height="36" rx="2" fill="#f3f5f7"/><rect x="26" y="4" width="18" height="20" fill="#5fd3ff"/><rect x="26" y="24" width="18" height="8" fill="#1ea5fb"/><rect x="26" y="32" width="18" height="8" rx="1" fill="#0583ef"/></g>`)}
      ${ic(46, 46, svg`<defs><linearGradient id="wn" x1="0" y1="0" x2="1" y2="1"><stop offset="0" stop-color="#4ccbff"/><stop offset=".7" stop-color="#0479d8"/></linearGradient></defs><path fill="url(#wn)" stroke="none" d="M1.5 0H22V22H0V1.5zM24 0H44.5L46 1.5V22H24zM0 24H22V46H1.5L0 44.5zM24 24H46V44.5L44.5 46H24z"/>`, "start")}
      <div class="find">${ic(29, 31, svg`<circle cx="17.5" cy="11.5" r="10" stroke-width="3"/><path d="M10.5 19L2 29" stroke-width="3.8"/>`)}${t("Search", "search", 82)}<span class="grow"></span>
        ${ic(60, 54, svg`<g stroke="none">
          <path fill="#8d8271" d="M2 10H9V27H2z"/><path fill="#d8cbb0" d="M9 9L12 2L15 9V27H9z"/><path fill="#4aa0e8" d="M16 6H23V27H16z"/><path fill="#cdbba0" d="M19 14H26V27H19z"/><path fill="#b0a49a" d="M25 9L28 0L32 9V27H25z"/><path fill="#6f6a72" d="M31 5H36V27H31z"/><path fill="#b9a48c" d="M34 15H40V27H34z"/><path fill="#1aa3ad" d="M39 4Q42 -3 45 4V27H39z"/><path fill="#a27b5b" d="M47 13H51V9H58V27H47z"/>
          <path fill="#6592ea" d="M0 26H60C60 42 46 54 30 54C14 54 0 42 0 26z"/><path fill="#8ab4f5" d="M34 26H60C60 38 52 46 44 50C46 42 40 34 34 26z"/>
          <path fill="#2f8a14" d="M9 26H32L34 30L40 33L36 40L35 48L29 53L26 44L24 38L16 36L11 32zM33 26H56L53 30L48 29L46 31L42 29L40 32L36 30zM42 41L44 43L42 46L41 44z"/></g>`)}</div>
      <div class="app tv">${ic(48, 44, svg`<defs><linearGradient id="bk" x1="0" y1="0" x2="1" y2="1"><stop offset="0" stop-color="#505050"/><stop offset="1" stop-color="#151515"/></linearGradient></defs><rect y="12" width="36" height="32" rx="1.5" fill="url(#bk)"/><rect x="12" width="36" height="32" rx="1.5" fill="#f4f4f4"/><path fill="#b3b3b3" d="M12 12H36V32H12z"/>`)}</div>
      <div class="app">${ic(46, 46, svg`<defs><linearGradient id="ch" x1="0" y1="1" x2="1" y2="0"><stop offset="0" stop-color="#4a53c8"/><stop offset=".5" stop-color="#6a5fc4"/><stop offset="1" stop-color="#a783c8"/></linearGradient></defs><path fill="url(#ch)" d="M23 0A23 22.5 0 1 1 12 42.5L2 45Q0 45 .5 43L3.5 34A22.5 22.5 0 0 1 23 0z"/><rect x="10" y="13" width="19" height="19" rx="3" fill="#fff"/><path fill="#fff" d="M31 19L36 14.5V30.5L31 26z"/>`)}</div>
      <div class="app dot">${ic(48, 43, svg`<defs><linearGradient id="fo" x1="0" y1="0" x2="1" y2="1"><stop offset="0" stop-color="#ffdc6b"/><stop offset="1" stop-color="#fcb71a"/></linearGradient></defs><path fill="#dfa000" d="M0 2Q0 0 2 0H14L20 5V12H0z"/><path fill="url(#fo)" d="M0 8H17L21 4.5H46Q48 4.5 48 6.5V41Q48 43 46 43H2Q0 43 0 41z"/><path fill="#0b77cf" d="M8 43V34Q8 29 13 29H35Q40 29 40 34V43z"/><rect x="15" y="35" width="18" height="2.5" rx="1" fill="#0a4d8c"/>`)}</div>
      <div class="app">${ic(48, 48, svg`<defs><linearGradient id="e1" x1="0" y1="0" x2="1" y2=".3"><stop offset="0" stop-color="#2bb3e8"/><stop offset=".6" stop-color="#35c4ce"/><stop offset="1" stop-color="#62dc4e"/></linearGradient><linearGradient id="e2" x1="0" y1="0" x2="0" y2="1"><stop offset="0" stop-color="#1590e0"/><stop offset="1" stop-color="#0b54a0"/></linearGradient></defs>
        <path fill="url(#e2)" d="M0 24C1 14 10 11 17 12C26 13 29 19 28 22C25 14 17 22 19 30C21 39 34 40 43 36C46 34 45 37 44 38C34 54 0 52 0 24z"/><path fill="#0c478f" d="M28 20C17 19 12 28 15 37C18 44 24 48 30 47C38 46 42 41 45 36C34 42 22 38 19.5 30C18.5 24 23 20 28 20z"/><path fill="url(#e1)" d="M0 23C2 -7 48 -8 48 20C48 30 40 32 34 32C29 32 27 30 28.5 27C31 22 26 12 15 12C7 12 1 17 0 23z"/>`)}</div>
      <div class="app dot">${ic(46, 48, svg`<defs><linearGradient id="st" x1="0" y1="0" x2="1" y2="1"><stop offset="0" stop-color="#0d6fc4"/><stop offset="1" stop-color="#252f52"/></linearGradient></defs><path fill="none" stroke="#30b9f5" stroke-width="4" d="M11.5 11V4Q11.5 2 13.5 2H32.5Q34.5 2 34.5 4V11"/><path fill="url(#st)" d="M0 8Q0 7 1 7H45Q46 7 46 8V41Q46 48 39 48H7Q0 48 0 41z"/><path fill="#f25022" d="M13 17H22V26H13z"/><path fill="#7fba00" d="M24 17H33V26H24z"/><path fill="#00a4ef" d="M13 28H22V37H13z"/><path fill="#ffb900" d="M24 28H33V37H24z"/><path fill="none" stroke="#30b9f5" stroke-width="4" d="M11.5 7V10M34.5 7V10"/>`)}</div>
      <div class="app">${ic(47, 48, svg`<defs><linearGradient id="rd" x1="0" y1="0" x2="1" y2=".6"><stop offset=".3" stop-color="#0011bd"/><stop offset=".5" stop-color="#5a7ff0"/><stop offset="1" stop-color="#dce8ff"/></linearGradient></defs><ellipse cx="18" cy="41" rx="11" ry="5" fill="#c9cbd0"/><path fill="#dadce0" d="M12 30L24 32V42H14z"/><path fill="#c7ccd2" d="M3 0L40 5L37 37L0 29z"/><path fill="url(#rd)" d="M5 2.5L37.5 7L35 33L2.5 27z"/><circle cx="35" cy="36" r="11.5" fill="#eff1ef" stroke="#9a9f9a" stroke-width="1"/><path fill="none" stroke="#48a83a" stroke-width="3.2" d="M28 34L33 38L28 43M42 29L37 33.5L42 38"/>`)}</div>
      <div class="app">${ic(22, 34, svg`<path fill="#b1060f" d="M0 0H7V34H0zM15 0H22V34H15z"/><path fill="#e50914" d="M0 0H7L22 34H15z"/>`)}</div>
      <div class="app">${ic(48, 34, svg`<rect width="48" height="34" rx="8" fill="#ff0033"/><path fill="#fff" d="M19 10L31 17L19 24z"/>`)}</div>
      <div class="app dot">${ic(48, 48, svg`<path fill="#0070ba" d="M0 30L4 36L35 11V0L2 31z"/><path fill="#0c8ad6" d="M0 18L5 12L36 37V48L2 20z"/><path fill="#25a6f0" d="M35 0L48 5V43L35 48L34 46Q36 46 36 44V4Q36 2 34 2z"/>`)}</div>
      <div class="app act">${ic(48, 48, svg`<path fill="#e33b2e" d="M24 24L3.2 12A24 24 0 0 1 44.8 12z"/><path fill="#fcc31e" d="M24 12H44.8A24 24 0 0 1 24 48L34.4 30z"/><path fill="#2a9d4a" d="M3.2 12A24 24 0 0 0 24 48L34.4 30L13.6 30z"/><circle cx="24" cy="24" r="12" fill="#fff"/><circle cx="24" cy="24" r="9.8" fill="#317df0"/>`)}</div>
      <div class="app dot">${ic(44, 44, svg`<defs><linearGradient id="ff" x1=".8" y1="0" x2=".3" y2="1"><stop offset="0" stop-color="#fff14a"/><stop offset=".45" stop-color="#ff9a1f"/><stop offset=".8" stop-color="#ff3b4b"/><stop offset="1" stop-color="#e5137e"/></linearGradient></defs><path fill="url(#ff)" d="M4 18C4 13 6 10 8 9C8 11 9 12 10 13C12 11 16 10 19 11C20 6 24 2 28 0C28 6 33 8 36 13L37 9C42 15 44 20 43 27C41 38 32 44 22 44C9 44 0 35 0 24C0 21 1 18 4 18z"/><circle cx="22" cy="22" r="9.5" fill="#7a3fe0"/><path fill="#ff9a2a" d="M6 16C10 13 17 13 21 17L26 18C24 22 19 20 17 24C14 28 20 32 26 31C20 36 9 32 8 24z"/>`)}</div>
      <div class="app dot">${ic(48, 36, svg`<rect width="48" height="36" rx="2" fill="#1f93d1"/><rect x="3" y="2.5" width="42" height="31" fill="#a8e0fa"/><circle cx="15" cy="15" r="9.5" fill="#1591dc"/><path fill="#ff9100" d="M16 5.5A9.5 9.5 0 0 1 25 15H16z"/><path d="M25 15H29V8H34M6 28.5H24" fill="none" stroke="#165f96" stroke-width="1.5"/><path d="M6 28.5H22" stroke="#ff9100" stroke-width="2"/><path d="M25 28.5H42" stroke="#1c86dc" stroke-width="2"/><rect x="22.5" y="26" width="3.5" height="5" fill="#1c86dc"/><g fill="#1c73c4"><rect x="34" y="6" width="8" height="4.5" rx="2"/><rect x="34" y="12.5" width="8" height="4.5" rx="2"/><rect x="34" y="19" width="8" height="4.5" rx="2"/></g><g fill="#fff"><circle cx="36.5" cy="8.2" r="1.7"/><circle cx="36.5" cy="14.7" r="1.7"/><circle cx="39.5" cy="21.2" r="1.7"/></g>`)}</div>
      ${ic(26, 14, svg`<path d="M1 13L13 1.5L25 13" stroke-width="2.4"/>`, "up")}
      ${ic(32, 24, svg`<path d="M1.5 8.5A20.5 20.5 0 0 1 30.5 8.5M6 13.5A14 14 0 0 1 26 13.5M10.5 18A8 8 0 0 1 21.5 18" stroke-width="2.2"/><circle class="solid" cx="16" cy="21" r="2.6"/>`, "wf")}
      ${ic(34, 28, svg`<path d="M1.5 9.5Q1.5 8.5 2.5 8.5H7L14 2.5V25.5L7 19.5H2.5Q1.5 19.5 1.5 18.5ZM19 9.5Q22.5 14 19 18.5M23.5 6Q29 14 23.5 22M28 2.5Q36 14 28 25.5" stroke-width="2"/>`, "ml14")}
      ${ic(32, 26, svg`<path d="M10 4.5H24.5Q27 4.5 27 7V19Q27 21.5 24.5 21.5H8" stroke-width="2.4"/><path class="solid" d="M28 10H30.5Q31.5 10 31.5 11V15Q31.5 16 30.5 16H28zM8 10H18V19H7V15z"/><path class="solid" d="M1 4H2V0H4V4H7V0H9V4H10V9Q10 11 8 11.5H6.5V24H4.5V11.5H3Q1 11 1 9z"/>`, "ml14")}
      <div class="clk">${t("1:10 AM", "clock", 81)}${t("7/12/2025", "clock", 106)}</div>
      <div class="two">2</div>
    </div>`;
  }

  render() {
    return html`<div class="screen">
      ${this.tabStrip()}${this.toolbar()}${this.header()}
      <div class="work">${this.sidebar()}${this.agentPanel()}<div class="split"><i></i></div>${this.preview()}</div>
      ${this.taskbar()}
    </div>`;
  }
}
customElements.define("app-root", AppRoot);
